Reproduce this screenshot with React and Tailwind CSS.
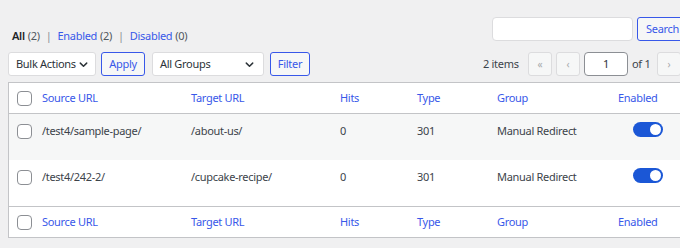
import React from "react";

const Chevron = () => (
  <svg width="11" height="11" viewBox="0 0 12 12" fill="none" stroke="#2c3338" strokeWidth="1.6" strokeLinecap="round" strokeLinejoin="round">
    <path d="M2.5 4.5 L6 8 L9.5 4.5" />
  </svg>
);

const Checkbox = () => (
  <div className="w-[15px] h-[15px] rounded-[4px] border border-[#8c8f94] bg-white" />
);

const Toggle = () => (
  <div className="w-[30px] h-[15px] rounded-full bg-[#1b57d6] flex items-center justify-end pr-[2px]">
    <div className="w-[11px] h-[11px] rounded-full bg-white" />
  </div>
);

const cols = "grid grid-cols-[26px_149px_149px_77px_80px_121px_1fr]";

const HeadRow = ({ border }) => (
  <div className={`${cols} h-[31px] items-center text-[#3858e9] ${border}`}>
    <div className="pl-[8px] flex items-center"><Checkbox /></div>
    <div className="pl-[7px]">Source URL</div>
    <div className="pl-[7px]">Target URL</div>
    <div className="pl-[7px]">Hits</div>
    <div className="pl-[7px]">Type</div>
    <div className="pl-[7px]">Group</div>
    <div className="pl-[7px]">Enabled</div>
  </div>
);

const DataRow = ({ src, tgt, bg }) => (
  <div className={`${cols} h-[46px] items-start pt-[8px] text-[#3c434a] ${bg}`}>
    <div className="pl-[8px] h-[18px] flex items-center"><Checkbox /></div>
    <div className="pl-[7px] leading-[18px]">{src}</div>
    <div className="pl-[7px] leading-[18px]">{tgt}</div>
    <div className="pl-[7px] leading-[18px]">0</div>
    <div className="pl-[7px] leading-[18px]">301</div>
    <div className="pl-[7px] leading-[18px]">Manual Redirect</div>
    <div className="pl-[22px] h-[15px] flex items-center"><Toggle /></div>
  </div>
);

const PageBtn = ({ children }) => (
  <div className="w-[24px] h-[24px] rounded-[3px] border border-[#dcdcde] bg-[#f6f7f7] text-[#a7aaad] text-[10px] flex items-center justify-center">
    {children}
  </div>
);

export default function App() {
  return (
    <div className="w-[680px] h-[248px] overflow-hidden bg-[#f0f0f1] text-[11px] tracking-[-0.3px] text-[#3c434a] font-['Noto_Sans','Open_Sans',sans-serif] whitespace-nowrap">
      <div className="pl-[8px] w-[740px]">
        {/* top row */}
        <div className="w-[685px] h-[52px] flex justify-between items-start pt-[17px]">
          <div className="mt-[10px] pl-[4px] leading-[18px] flex items-center">
            <span className="font-semibold text-[#1d2327]">All</span>
            <span className="text-[#50575e] ml-[3px]">(2)</span>
            <span className="text-[#8c8f94] mx-[6px]">|</span>
            <span className="text-[#3858e9]">Enabled</span>
            <span className="text-[#50575e] ml-[3px]">(2)</span>
            <span className="text-[#8c8f94] mx-[6px]">|</span>
            <span className="text-[#3858e9]">Disabled</span>
            <span className="text-[#50575e] ml-[3px]">(0)</span>
          </div>
          <div className="flex gap-[4px]">
            <div className="w-[141px] h-[24px] rounded-[4px] border border-[#dcdcde] bg-white" />
            <div className="w-[56px] h-[24px] rounded-[3px] border border-[#3858e9] bg-[#f6f7f7] text-[#3858e9] flex items-center pl-[8px]">Search</div>
          </div>
        </div>
        {/* tablenav */}
        <div className="w-[701px] flex justify-between items-center h-[24px]">
          <div className="flex items-center">
            <div className="w-[88px] h-[24px] rounded-[3px] border border-[#dcdcde] bg-white flex items-center justify-between pl-[7px] pr-[6px] text-[#2c3338]">
              <span>Bulk Actions</span>
              <Chevron />
            </div>
            <div className="ml-[5px] w-[44px] h-[24px] rounded-[3px] border border-[#3858e9] bg-[#f6f7f7] text-[#3858e9] flex items-center justify-center">Apply</div>
            <div className="ml-[7px] w-[112px] h-[24px] rounded-[3px] border border-[#dcdcde] bg-white flex items-center justify-between pl-[7px] pr-[8px] text-[#2c3338]">
              <span>All Groups</span>
              <Chevron />
            </div>
            <div className="ml-[6px] w-[40px] h-[24px] rounded-[3px] border border-[#3858e9] bg-[#f6f7f7] text-[#3858e9] flex items-center justify-center">Filter</div>
          </div>
          <div className="flex items-center">
            <span className="text-[#3c434a] w-[45px]">2 items</span>
            <PageBtn>«</PageBtn>
            <div className="ml-[4px]"><PageBtn>‹</PageBtn></div>
            <div className="ml-[4px] w-[44px] h-[24px] rounded-[4px] border border-[#8c8f94] bg-white flex items-center justify-center text-[#2c3338]">1</div>
            <span className="ml-[4px] w-[25px]">of 1</span>
            <PageBtn>›</PageBtn>
            <div className="ml-[4px]"><PageBtn>»</PageBtn></div>
          </div>
        </div>
        {/* table */}
        <div className="mt-[6px] w-[720px] border border-[#c3c4c7] bg-white">
          <HeadRow border="border-b border-[#c3c4c7]" />
          <DataRow src="/test4/sample-page/" tgt="/about-us/" bg="bg-[#f6f7f7]" />
          <DataRow src="/test4/242-2/" tgt="/cupcake-recipe/" bg="bg-white" />
          <HeadRow border="border-t border-[#c3c4c7]" />
        </div>
      </div>
    </div>
  );
}
